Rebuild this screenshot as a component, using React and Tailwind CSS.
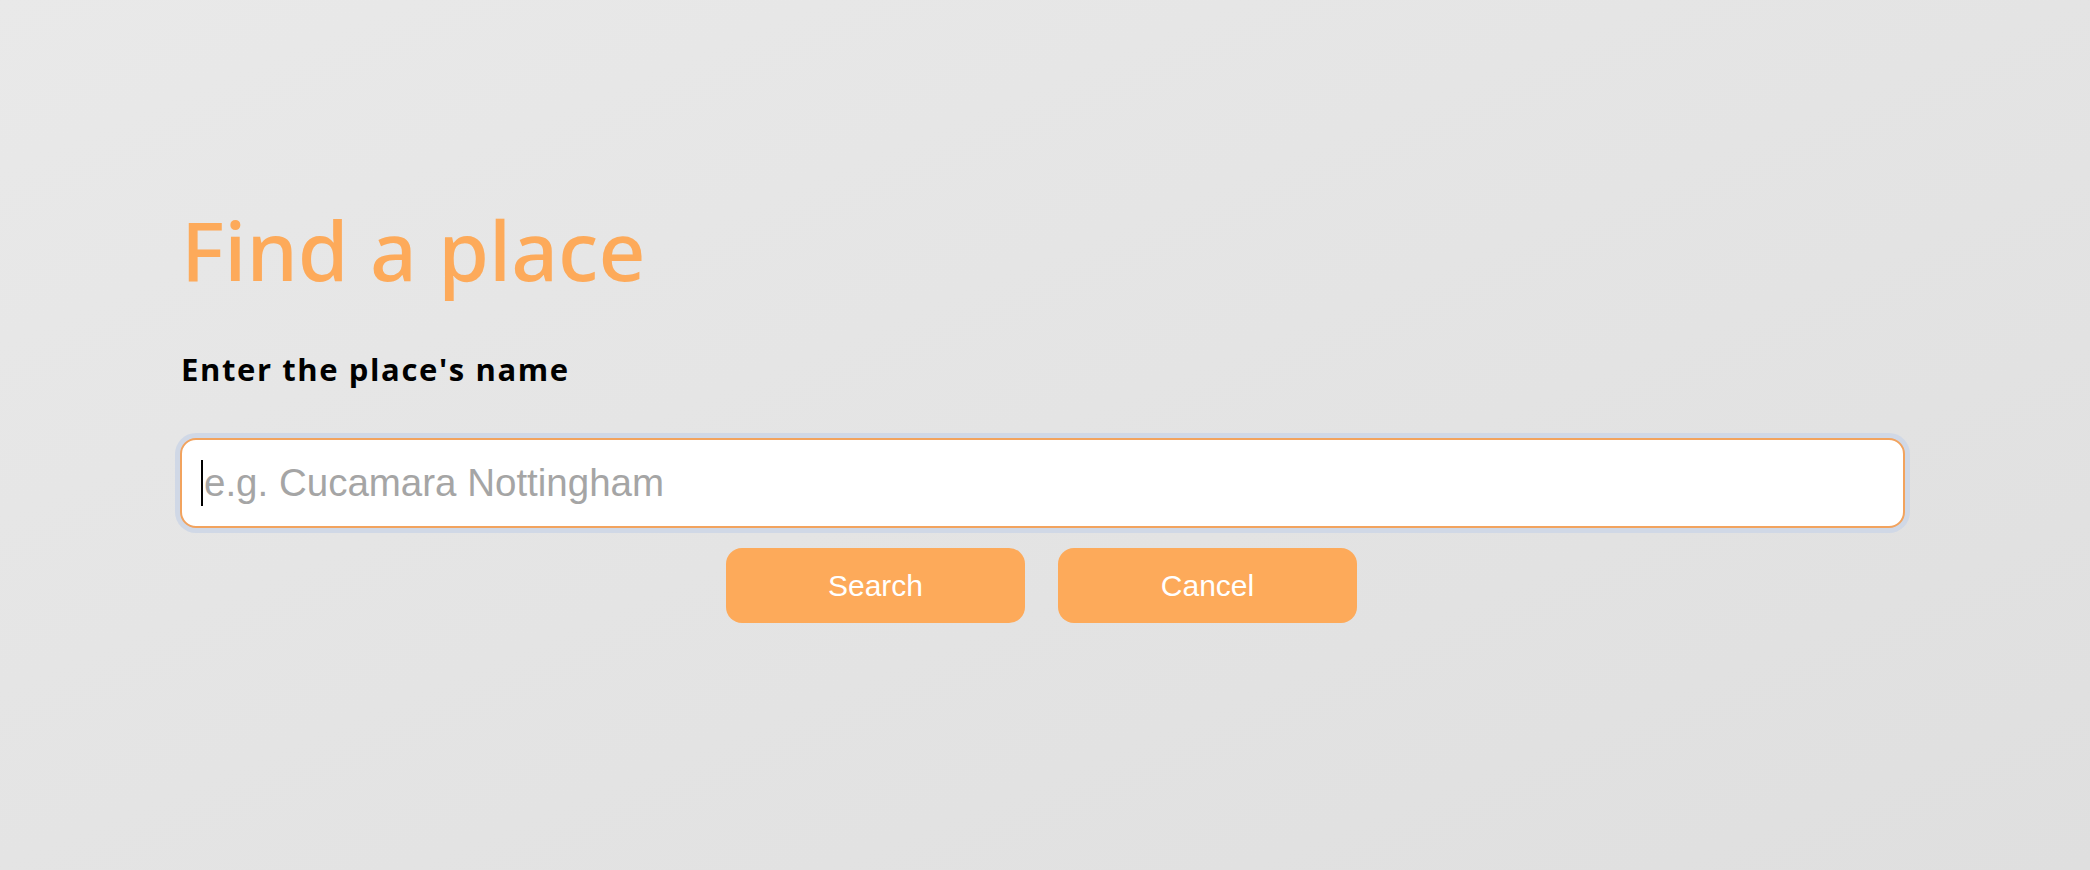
export default function App() {
  return (
    <div className="min-h-[870px] w-full bg-gradient-to-br from-[#e9e9e9] to-[#dfdfdf] font-['Open_Sans',sans-serif]">
      <div className="pl-[180px] pt-[208px] w-[1905px]">
        <h1 className="text-[82px] leading-none font-medium font-['Noto_Sans','Open_Sans',sans-serif] text-[#fdaa5a] pl-[1px]">Find a place</h1>
        <label className="block mt-[64px] pl-[1px] text-[31px] leading-none font-bold tracking-[1.6px] text-black">
          Enter the place's name
        </label>
        <div className="relative mt-[53px]">
          <input
            type="text"
            placeholder="e.g. Cucamara Nottingham"
            className="w-full h-[90px] rounded-[16px] border-2 border-[#f2a35e] bg-white pl-[22px] text-[38.5px] font-['Liberation_Sans',Arial,sans-serif] text-black placeholder:text-[#a5a5a5] outline-none ring-[5px] ring-[#d0d8e6]"
          />
          <span className="absolute left-[21px] top-[22px] h-[46px] w-[2px] bg-black" />
        </div>
        <div className="flex gap-[33px] mt-[20px] pl-[546px] font-['Liberation_Sans',Arial,sans-serif]">
          <button className="w-[299px] h-[75px] rounded-[16px] bg-[#fdaa5a] text-white text-[30px]">Search</button>
          <button className="w-[299px] h-[75px] rounded-[16px] bg-[#fdaa5a] text-white text-[30px]">Cancel</button>
        </div>
      </div>
    </div>
  );
}
